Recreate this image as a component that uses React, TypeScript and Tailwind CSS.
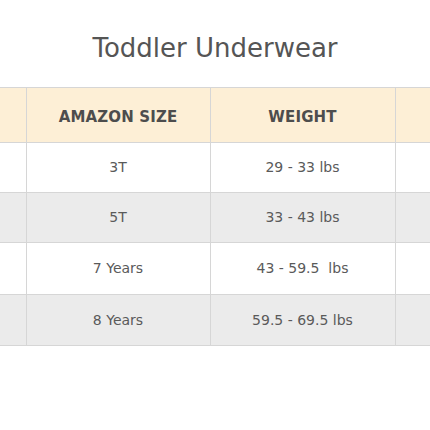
const rows = [
  { size: "3T", weight: "29 - 33 lbs", shaded: false, h: "h-[50px]" },
  { size: "5T", weight: "33 - 43 lbs", shaded: true, h: "h-[50px]" },
  { size: "7 Years", weight: "43 - 59.5  lbs", shaded: false, h: "h-[52px]" },
  { size: "8 Years", weight: "59.5 - 69.5 lbs", shaded: true, h: "h-[51px]" },
]

export default function App() {
  return (
    <div
      className="h-[430px] w-[430px] overflow-hidden bg-white text-[#5a5a5a]"
      style={{ fontFamily: '"DejaVu Sans", "Noto Sans", sans-serif' }}
    >
      <h1 className="pt-[33px] text-center text-[26px] leading-[30px] font-normal text-[#555555]">
        Toddler Underwear
      </h1>

      <table className="mt-[24px] w-[460px] table-fixed border-collapse">
        <colgroup>
          <col className="w-[26px]" />
          <col className="w-[184px]" />
          <col className="w-[185px]" />
          <col />
        </colgroup>
        <thead>
          <tr className="h-[55px] bg-[#fdefd6]">
            <th className="border border-[#d6d6d6] border-l-0" />
            <th className="border border-[#d6d6d6] pt-[4px] text-[15px] font-bold tracking-[0.01em] text-[#4d4d4d]">
              AMAZON SIZE
            </th>
            <th className="border border-[#d6d6d6] pt-[4px] text-[15px] font-bold tracking-[0.01em] text-[#4d4d4d]">
              WEIGHT
            </th>
            <th className="border border-[#d6d6d6]" />
          </tr>
        </thead>
        <tbody>
          {rows.map((row) => (
            <tr key={row.size} className={`${row.h} ${row.shaded ? "bg-[#ebebeb]" : "bg-white"}`}>
              <td className="border border-[#d6d6d6] border-l-0" />
              <td className="border border-[#d6d6d6] text-center text-[14px] text-[#5a5a5a]">
                {row.size}
              </td>
              <td className="border border-[#d6d6d6] text-center text-[14px] whitespace-pre text-[#5a5a5a]">
                {row.weight}
              </td>
              <td className="border border-[#d6d6d6]" />
            </tr>
          ))}
        </tbody>
      </table>
    </div>
  )
}
